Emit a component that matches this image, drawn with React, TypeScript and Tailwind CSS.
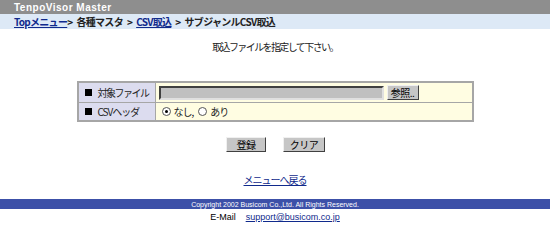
const jp = "font-['MS_PGothic','Noto_Sans_CJK_JP',sans-serif]";

function Btn({ label, w }: { label: string; w: string }) {
  return (
    <div
      className={`${w} h-[15px] flex items-center justify-center bg-[#c6c6c6] border border-t-[#f0f0f0] border-l-[#f0f0f0] border-r-[#404040] border-b-[#404040] text-[10px] leading-none text-black tracking-[-0.5px]`}
    >
      {label}
    </div>
  );
}

export default function App() {
  return (
    <div className={`w-[550px] h-[238px] bg-white overflow-hidden ${jp}`}>
      {/* title bar */}
      <div className="h-[14px] bg-[#8e8e8e] pl-[14px] flex items-center">
        <span className="text-[10px] font-bold text-white tracking-[0.5px] font-['Liberation_Sans',sans-serif]">
          TenpoVisor Master
        </span>
      </div>

      {/* breadcrumb */}
      <div className="h-[15px] bg-[#dde9f6] pl-[14px] flex items-center text-[10px] font-semibold text-[#222] whitespace-nowrap tracking-[-0.7px]">
        <a className="text-[#102a8c] underline">Topメニュー</a>
        <span>&gt;</span>
        <span className="ml-[4px]">各種マスタ</span>
        <span className="ml-[4px]">&gt;</span>
        <a className="text-[#102a8c] underline ml-[4px]">CSV取込</a>
        <span className="ml-[4px]">&gt;</span>
        <span className="ml-[4px]">サブジャンルCSV取込</span>
      </div>

      <p className="mt-[13px] h-[11px] text-center text-[10px] text-[#222] leading-none tracking-[-1.6px]">
        取込ファイルを指定して下さい。
      </p>

      {/* form table */}
      <div className="mt-[28px] mx-auto w-[397px] border-2 border-[#a6a6a6] text-[10px] text-[#222] whitespace-nowrap">
        <div className="flex h-[20px] border-b border-[#a6a6a6]">
          <div className="w-[77px] bg-[#dcdcef] border-r border-[#a6a6a6] flex items-center pl-[6px] gap-[6px]">
            <span className="w-[7px] h-[7px] bg-black" />
            <span className="tracking-[-1.5px]">対象ファイル</span>
          </div>
          <div className="flex-1 bg-[#fffde2] flex items-center pl-[3px] gap-[3px]">
            <div className="w-[225px] h-[14px] bg-[#c0c0c0] border-2 border-t-[#404040] border-l-[#404040] border-r-[#e0e0e0] border-b-[#e0e0e0]" />
            <Btn label="参照.." w="w-[32px]" />
          </div>
        </div>
        <div className="flex h-[17px]">
          <div className="w-[77px] bg-[#dcdcef] border-r border-[#a6a6a6] flex items-center pl-[6px] gap-[6px]">
            <span className="w-[7px] h-[7px] bg-black" />
            <span className="tracking-[-1px]">CSVヘッダ</span>
          </div>
          <div className="flex-1 bg-[#fffde2] flex items-center pl-[6px] tracking-[-1px]">
            <span className="w-[9px] h-[9px] rounded-full border border-[#555] bg-white flex items-center justify-center">
              <span className="w-[3px] h-[3px] rounded-full bg-black" />
            </span>
            <span className="ml-[3px]">なし,</span>
            <span className="ml-[5px] w-[9px] h-[9px] rounded-full border border-[#555] bg-white" />
            <span className="ml-[3px]">あり</span>
          </div>
        </div>
      </div>

      {/* buttons */}
      <div className="mt-[15px] flex justify-center gap-[17px] pl-[1px]">
        <Btn label="登録" w="w-[40px]" />
        <Btn label="クリア" w="w-[42px]" />
      </div>

      <p className="mt-[23px] h-[11px] text-center text-[10px] leading-none tracking-[-1px]">
        <a className="text-[#102a8c] underline">メニューへ戻る</a>
      </p>

      {/* footer */}
      <div className="mt-[13px] h-[10px] bg-[#3c50a8] flex items-center justify-center">
        <span className="text-[7px] text-white leading-none font-['Liberation_Sans',sans-serif]">
          Copyright 2002 Busicom Co.,Ltd. All Rights Reserved.
        </span>
      </div>
      <div className="mt-[4px] flex justify-center text-[9px] leading-none font-['Liberation_Sans',sans-serif]">
        <span className="text-black">E-Mail</span>
        <a className="ml-[10px] text-[#102a8c] underline">support@busicom.co.jp</a>
      </div>
    </div>
  );
}
